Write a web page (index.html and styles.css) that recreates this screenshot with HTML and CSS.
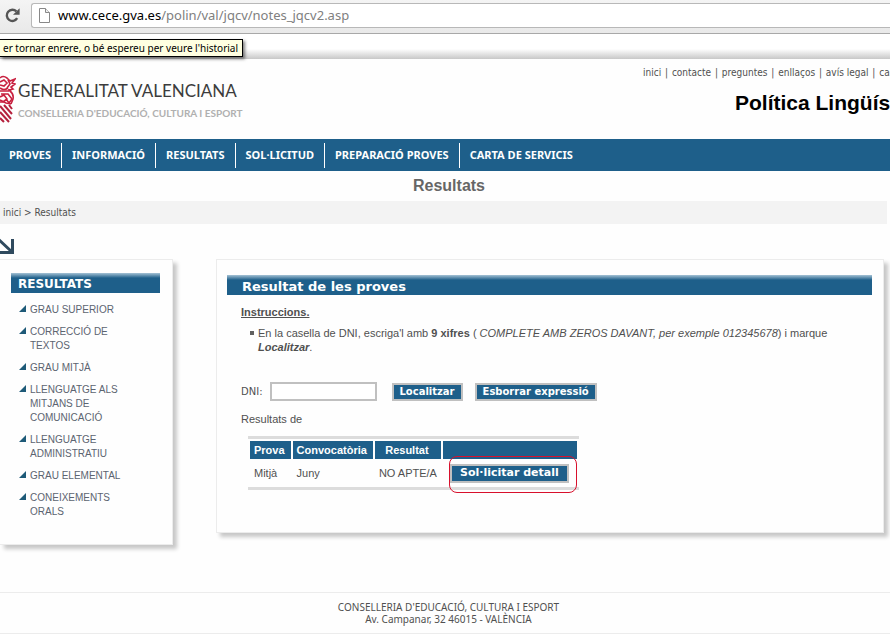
FILE: index.html
```html
<!DOCTYPE html>
<html lang="ca">
<head>
  <meta charset="UTF-8">
  <title>Resultats - Política Lingüística</title>
  <link rel="stylesheet" href="styles.css">
</head>
<body>

  <!-- Barra del navegador -->
  <div class="browser-bar">
    <button class="reload" type="button" aria-label="Actualitzar">
      <svg width="17" height="17" viewBox="0 0 17 17">
        <path d="M13.2 11.2A5.6 5.6 0 1 1 12.4 4.4" fill="none" stroke="#555" stroke-width="2.4"/>
        <path d="M15.6 1.2v6.6H9z" fill="#555"/>
      </svg>
    </button>
    <div class="address">
      <svg width="11" height="15" viewBox="0 0 11 15">
        <path d="M.5.5h6l4 4v10H.5z" fill="#fff" stroke="#888"/>
        <path d="M6.5.5v4h4" fill="#eee" stroke="#888"/>
      </svg>
      <p><span class="host">www.cece.gva.es</span>/polin/val/jqcv/notes_jqcv2.asp</p>
    </div>
    <div class="tooltip">er tornar enrere, o bé espereu per veure l'historial</div>
  </div>
  <div class="top-shadow"></div>

  <header class="header">
    <div class="logo">
      <svg width="16" height="48" viewBox="0 0 16 48">
        <g fill="none" stroke="#c8203f" stroke-width="1.6">
          <path d="M0 3q3-3 7 0l3 3 5-2-3 4 3 1-4 3 2 2-5 1"/>
          <path d="M0 7l4-2 3 3-3 3-4-1M0 13q4 3 8 0M8 5l2 4-3 4"/>
          <path d="M0 16h9l3-2M1 19h7l4 5-3 4-3-4M0 22l4-2 3 4-4 3H0"/>
          <path d="M10 16q4 3 3 8l-2 5M0 25l6 3 5 1"/>
        </g>
        <g stroke="#b5203c" stroke-width="2">
          <path d="M0 31l11 13M0 37l9 10M0 43l4 4M4 30l8 9M9 30l3 4"/>
        </g>
      </svg>
      <div>
        <p class="logo-name">GENERALITAT VALENCIANA</p>
        <p class="logo-dept">CONSELLERIA D'EDUCACIÓ, CULTURA I ESPORT</p>
      </div>
    </div>
    <div class="header-right">
      <p class="top-links">
        <a href="#">inici</a> | <a href="#">contacte</a> | <a href="#">preguntes</a> | <a href="#">enllaços</a> | <a href="#">avís legal</a> | <a href="#">castellano</a>
      </p>
      <p class="site-name">Política Lingüística</p>
    </div>
  </header>

  <nav class="main-nav">
    <a href="#">PROVES</a>
    <a href="#">INFORMACIÓ</a>
    <a href="#">RESULTATS</a>
    <a href="#">SOL·LICITUD</a>
    <a href="#">PREPARACIÓ PROVES</a>
    <a href="#">CARTA DE SERVICIS</a>
  </nav>

  <h1 class="page-title">Resultats</h1>
  <p class="breadcrumb"><a href="#">inici</a> &gt; Resultats</p>

  <div class="arrow">
    <svg width="14" height="17" viewBox="0 0 14 17">
      <path d="M-3 1L12 15M12.5 2v13.5H0" fill="none" stroke="#2f4a5e" stroke-width="3"/>
    </svg>
  </div>

  <div class="content">
    <aside class="panel sidebar">
      <h2 class="bar">RESULTATS</h2>
      <ul>
        <li><a href="#">GRAU SUPERIOR</a></li>
        <li><a href="#">CORRECCIÓ DE TEXTOS</a></li>
        <li><a href="#">GRAU MITJÀ</a></li>
        <li><a href="#">LLENGUATGE ALS MITJANS DE COMUNICACIÓ</a></li>
        <li><a href="#">LLENGUATGE ADMINISTRATIU</a></li>
        <li><a href="#">GRAU ELEMENTAL</a></li>
        <li><a href="#">CONEIXEMENTS ORALS</a></li>
      </ul>
    </aside>

    <main class="panel results">
      <h2 class="bar">Resultat de les proves</h2>
      <div class="results-body">
        <h3>Instruccions.</h3>
        <ul class="instructions">
          <li>En la casella de DNI, escriga'l amb <b>9 xifres</b> ( <i>COMPLETE AMB ZEROS DAVANT, per exemple 012345678</i>) i marque <b><i>Localitzar</i></b>.</li>
        </ul>

        <form class="search">
          <label for="dni">DNI:</label>
          <input type="text" id="dni" name="dni">
          <button class="btn" type="submit">Localitzar</button>
          <button class="btn" type="reset">Esborrar expressió</button>
        </form>

        <p>Resultats de</p>

        <table>
          <thead>
            <tr>
              <th>Prova</th>
              <th>Convocatòria</th>
              <th>Resultat</th>
              <th class="action"></th>
            </tr>
          </thead>
          <tbody>
            <tr>
              <td>Mitjà</td>
              <td>Juny</td>
              <td>NO APTE/A</td>
              <td class="action">
                <button class="btn btn-detail" type="button">Sol·licitar detall</button>
                <span class="mark"></span>
              </td>
            </tr>
          </tbody>
        </table>
      </div>
    </main>
  </div>

  <footer class="footer">
    <p>CONSELLERIA D'EDUCACIÓ, CULTURA I ESPORT</p>
    <p>Av. Campanar, 32 46015 - VALÈNCIA</p>
  </footer>

</body>
</html>
```
FILE: styles.css
```css
* {
  box-sizing: border-box;
}

body {
  margin: 0;
  background-color: #fefefe;
  color: #505050;
  font-family: "Liberation Sans", Arial, sans-serif;
  font-size: 11px;
  line-height: 14px;
  overflow-x: hidden;
}

p, h1, h2, h3, ul {
  margin: 0;
  padding: 0;
}

a {
  color: inherit;
  text-decoration: none;
}

/* Barra del navegador */
.browser-bar {
  position: relative;
  display: flex;
  align-items: center;
  height: 34px;
  padding: 3px 0 6px 4px;
  background: linear-gradient(#f4f4f4, #e9e9e9);
  border-bottom: 1px solid #a8a8a8;
}

.reload {
  display: flex;
  margin: 0;
  padding: 0;
  border: none;
  background: none;
}

.address {
  flex: 1;
  display: flex;
  align-items: center;
  gap: 8px;
  height: 25px;
  margin-left: 10px;
  padding-left: 7px;
  background-color: #fff;
  border: 1px solid #b8b8b8;
  border-right: none;
  border-radius: 3px 0 0 3px;
  color: #808080;
  font-family: "Noto Sans", Tahoma, sans-serif;
  font-size: 13px;
}

.host {
  color: #000;
}

.tooltip {
  position: absolute;
  top: 39px;
  left: 0;
  padding: 0 4px 0 3px;
  background-color: #ffffe1;
  border: 1px solid #000;
  border-left: none;
  box-shadow: 2px 2px 3px rgba(0, 0, 0, 0.5);
  color: #000;
  font-family: "Noto Sans", Tahoma, sans-serif;
  font-size: 10px;
  line-height: 16px;
  white-space: nowrap;
}

.top-shadow {
  height: 25px;
  background: linear-gradient(#fff 60%, #c8c8c8);
}

/* Capçalera */
.header {
  display: flex;
  justify-content: space-between;
  height: 80px;
}

.logo {
  display: flex;
  gap: 2px;
  padding-top: 16px;
}

.logo-name {
  color: #3c3c3c;
  font-family: Lato, "Arial Narrow", sans-serif;
  font-size: 17px;
  line-height: 32px;
  white-space: nowrap;
}

.logo-dept {
  color: #b0b0b0;
  font-family: Lato, "Arial Narrow", sans-serif;
  font-size: 10px;
  font-weight: bold;
  line-height: 12px;
  white-space: nowrap;
}

.header-right {
  width: 247px;
  padding-top: 7px;
  white-space: nowrap;
}

.top-links {
  font-family: "DejaVu Sans Condensed", "DejaVu Sans", sans-serif;
  font-size: 10px;
}

.top-links a {
  padding: 0 1px;
}

.top-links a:first-child {
  padding-left: 0;
}

.site-name {
  padding: 11px 0 0 92px;
  color: #000;
  font-size: 21px;
  font-weight: bold;
  line-height: 24px;
}

.main-nav {
  display: flex;
  align-items: center;
  height: 32px;
  background-color: #1e5f8a;
}

.main-nav a {
  padding: 0 10px 2px;
  border-right: 1px solid #fff;
  color: #fff;
  font-family: "Noto Sans", Tahoma, sans-serif;
  font-size: 11px;
  font-weight: bold;
  font-feature-settings: "locl" 0;
  line-height: 23px;
}

.main-nav a:first-child {
  padding-left: 9px;
}

.main-nav a:last-child {
  border-right: none;
}

.page-title {
  padding-left: 8px;
  color: #666;
  font-size: 16px;
  line-height: 30px;
  text-align: center;
}

.breadcrumb {
  margin-right: 3px;
  padding-left: 3px;
  background-color: #f3f3f3;
  font-family: "DejaVu Sans Condensed", "DejaVu Sans", sans-serif;
  font-size: 10px;
  line-height: 23px;
}

.arrow {
  display: flex;
  padding: 13px 0 5px;
}

/* Contingut */
.content {
  display: flex;
  align-items: flex-start;
  gap: 43px;
  padding-right: 6px;
}

.panel {
  background-color: #fefefe;
  border: 1px solid #ececec;
  box-shadow: 4px 4px 4px rgba(0, 0, 0, 0.22);
}

.bar {
  padding-top: 3px;
  background: linear-gradient(#a5c2d5, #1e5f8a 5px);
  color: #fff;
  font-family: "DejaVu Sans", Verdana, sans-serif;
  font-size: 13px;
  line-height: 17px;
}

.sidebar {
  width: 173px;
  padding: 13px 12px 17px 11px;
  border-left: none;
}

.sidebar .bar {
  padding-left: 7px;
  font-size: 12px;
}

.sidebar ul {
  padding: 10px 30px 0 19px;
  list-style: none;
  color: #5c6470;
  font-size: 10px;
}

.sidebar li {
  position: relative;
  margin-bottom: 8px;
}

.sidebar li::before {
  content: "";
  position: absolute;
  top: 2px;
  left: -11px;
  border-left: 7px solid transparent;
  border-bottom: 7px solid #1e5a78;
}

.results {
  flex: 1;
  padding: 15px 11px 42px 10px;
}

.results .bar {
  padding-left: 15px;
}

.results-body {
  padding: 10px 14px 0;
}

.results-body h3 {
  font-size: 11px;
  line-height: 14px;
  text-decoration: underline;
}

.instructions {
  padding: 7px 22px 0 17px;
  list-style: none;
}

.instructions li {
  position: relative;
}

.instructions li::before {
  content: "";
  position: absolute;
  top: 5px;
  left: -8px;
  width: 4px;
  height: 4px;
  background-color: #606060;
}

.search {
  display: flex;
  align-items: center;
  padding: 28px 0 11px;
}

.search label {
  margin-right: 7px;
  font-family: "DejaVu Sans", Verdana, sans-serif;
  font-size: 10px;
}

.search input {
  width: 107px;
  height: 19px;
  margin-right: 15px;
  border: 2px solid #c0c0c0;
  background-color: #fff;
}

.btn {
  height: 18px;
  margin-right: 12px;
  padding: 0 6px;
  background-color: #1e5f8a;
  border: 2px solid #c0c0c0;
  color: #fff;
  font-family: "DejaVu Sans", Verdana, sans-serif;
  font-size: 10px;
  font-weight: bold;
  line-height: 14px;
  white-space: nowrap;
}

.btn-detail {
  height: 19px;
  margin: 0;
  padding: 0 8px;
  font-size: 11px;
}

/* Taula de resultats */
table {
  margin: 10px 0 0 7px;
  border-top: 3px solid #dcdcdc;
  border-bottom: 3px solid #dcdcdc;
  border-spacing: 2px;
}

th {
  padding: 0 6px 0 4px;
  background-color: #1e5f8a;
  color: #fff;
  line-height: 18px;
}

td {
  height: 24px;
  padding: 0 4px;
}

.action {
  position: relative;
  width: 134px;
  padding: 0 7px;
}

.mark {
  position: absolute;
  top: -5px;
  left: 6px;
  right: 0;
  bottom: -8px;
  border: 1px solid #d8102c;
  border-radius: 8px;
  pointer-events: none;
}

.footer {
  margin-top: 47px;
  padding: 8px 0 8px 7px;
  border-top: 1px solid #ececec;
  border-bottom: 1px solid #ececec;
  font-family: "Noto Sans", Arial, sans-serif;
  font-size: 10px;
  line-height: 12px;
  text-align: center;
}
```
